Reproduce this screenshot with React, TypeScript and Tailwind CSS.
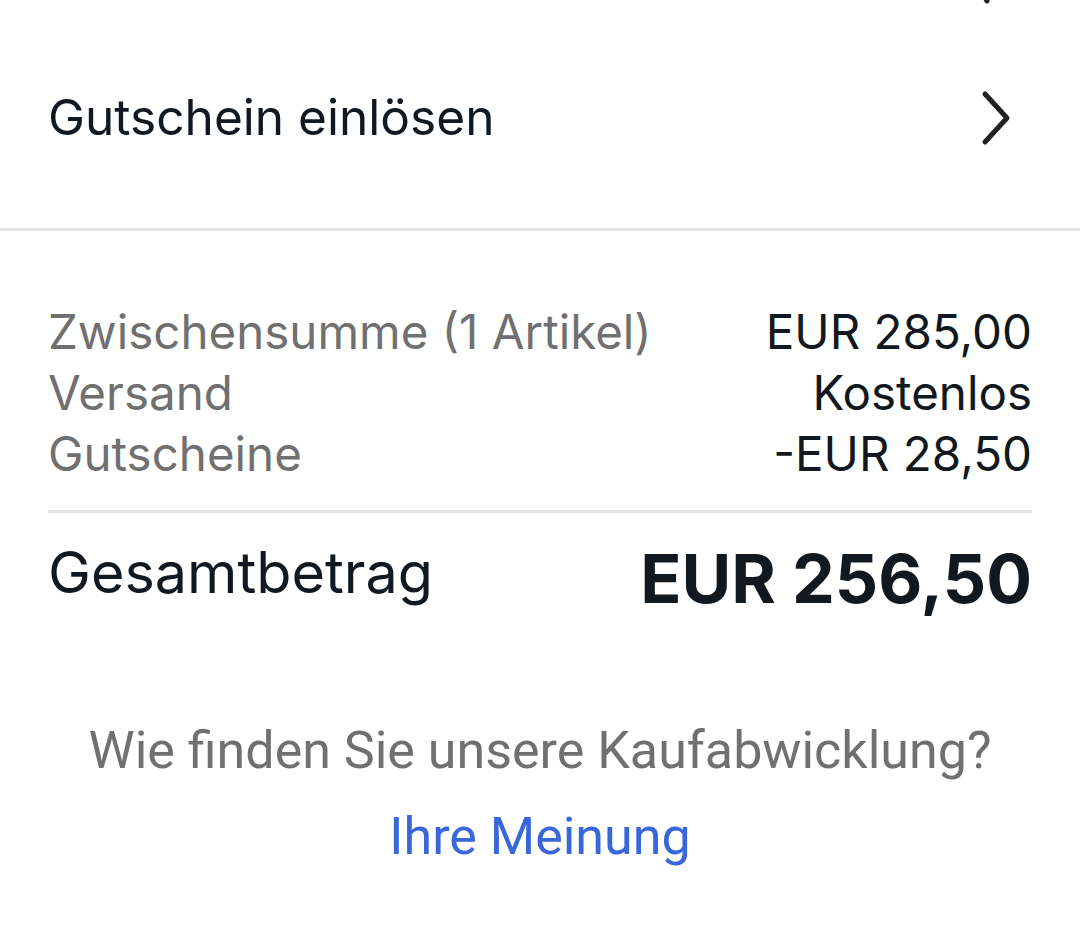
import React from "react";

const SummaryRow = ({ label, value }: { label: string; value: string }) => (
  <div className="flex justify-between items-center h-[61px]">
    <span className="text-[#707070]">{label}</span>
    <span className="text-[#111820]">{value}</span>
  </div>
);

export default function App() {
  return (
    <div className="w-[1080px] h-[925px] bg-white overflow-hidden font-['Inter',sans-serif] text-[#111820]">
      {/* tip of a chevron cut off from the row above */}
      <div className="relative h-0">
        <svg className="absolute left-[970px] top-[-22px]" width="30" height="26" viewBox="0 0 30 26">
          <path d="M6 2 L17 23" stroke="#222" strokeWidth="5" strokeLinecap="round" fill="none" />
        </svg>
      </div>

      <div className="flex items-center justify-between h-[228px] pt-[8px] pl-[48px] pr-[68px]">
        <span className="text-[49.6px] leading-none">Gutschein einlösen</span>
        <svg width="32" height="56" viewBox="0 0 32 56">
          <path d="M5 4 L27 28 L5 52" stroke="#222" strokeWidth="5" strokeLinecap="round" strokeLinejoin="round" fill="none" />
        </svg>
      </div>
      <div className="h-[3px] bg-[#e5e5e5]" />

      <div className="px-[48px] pt-[70px] text-[47.5px] leading-none">
        <SummaryRow label="Zwischensumme (1 Artikel)" value="EUR 285,00" />
        <SummaryRow label="Versand" value="Kostenlos" />
        <SummaryRow label="Gutscheine" value="-EUR 28,50" />
        <div className="h-[3px] bg-[#e5e5e5] mt-[26px]" />
        <div className="flex justify-between items-center h-[130px]">
          <span className="text-[57.5px] -mt-[10px]">Gesamtbetrag</span>
          <span className="text-[68px] font-bold">EUR 256,50</span>
        </div>
      </div>

      <div className="flex flex-col items-center pt-[82px] font-['Roboto',sans-serif]">
        <span className="text-[52px] text-[#707070] leading-none">Wie finden Sie unsere Kaufabwicklung?</span>
        <span className="text-[52px] text-[#3867dc] leading-none mt-[34px]">Ihre Meinung</span>
      </div>
    </div>
  );
}
